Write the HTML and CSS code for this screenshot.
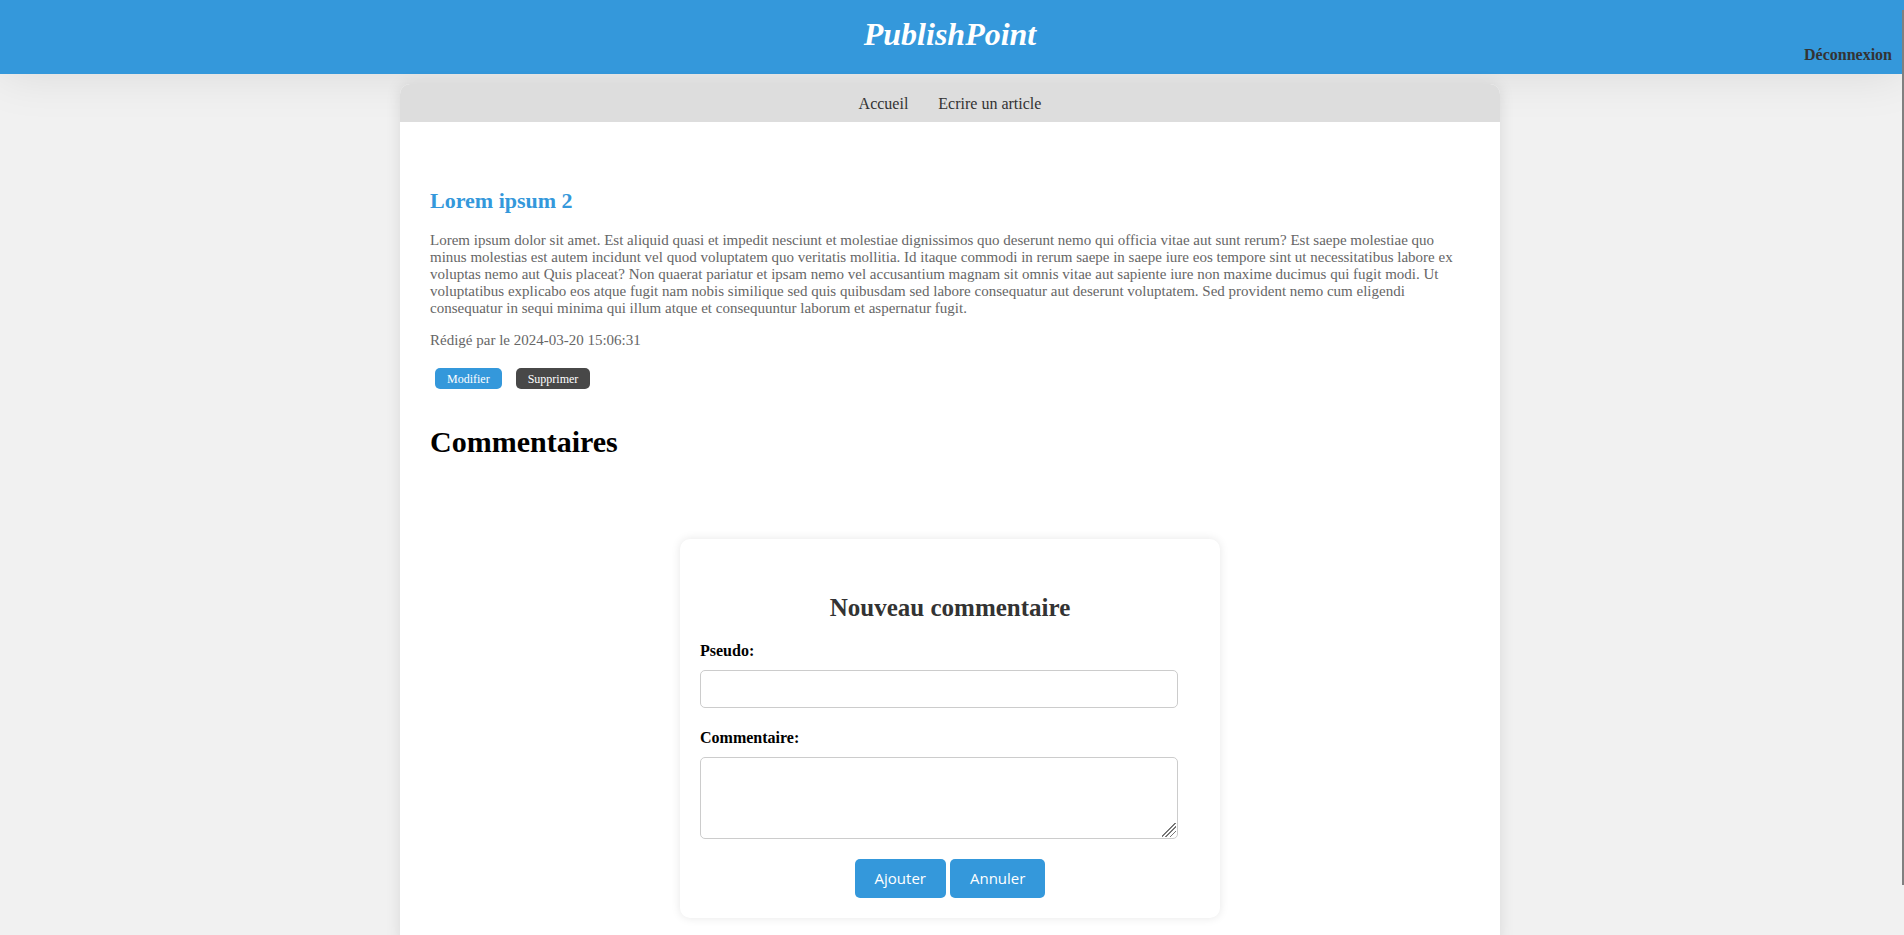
FILE: index.html
```html
<!DOCTYPE html>
<html lang="fr">
<head>
<meta charset="utf-8">
<meta name="viewport" content="width=device-width, initial-scale=1">
<title>PublishPoint</title>
<link rel="stylesheet" href="styles.css">
</head>
<body>
<header class="site-header">
  <h1 class="brand">PublishPoint</h1>
  <a class="logout" href="#">Déconnexion</a>
</header>
<div class="layout">
<main class="page">
  <nav class="menu">
    <a class="menu-link" href="#">Accueil</a>
    <a class="menu-link" href="#">Ecrire un article</a>
  </nav>
  <div class="content">
    <article class="article">
      <h2 class="article-title">Lorem ipsum 2</h2>
      <p class="article-text">Lorem ipsum dolor sit amet. Est aliquid quasi et impedit nesciunt et molestiae dignissimos quo deserunt nemo qui officia vitae aut sunt rerum? Est saepe molestiae quo minus molestias est autem incidunt vel quod voluptatem quo veritatis mollitia. Id itaque commodi in rerum saepe in saepe iure eos tempore sint ut necessitatibus labore ex voluptas nemo aut Quis placeat? Non quaerat pariatur et ipsam nemo vel accusantium magnam sit omnis vitae aut sapiente iure non maxime ducimus qui fugit modi. Ut voluptatibus explicabo eos atque fugit nam nobis similique sed quis quibusdam sed labore consequatur aut deserunt voluptatem. Sed provident nemo cum eligendi consequatur in sequi minima qui illum atque et consequuntur laborum et aspernatur fugit.</p>
      <p class="article-text">Rédigé par le 2024-03-20 15:06:31</p>
      <div class="actions">
        <a class="action" href="#">Modifier</a>
        <a class="action action-delete" href="#">Supprimer</a>
      </div>
    </article>
    <h1 class="comments-title">Commentaires</h1>
    <form class="comment-form">
      <h2 class="form-title">Nouveau commentaire</h2>
      <label class="label" for="pseudo">Pseudo:</label>
      <input class="field" type="text" id="pseudo" name="pseudo">
      <label class="label" for="commentaire">Commentaire:</label>
      <textarea class="field field-area" id="commentaire" name="commentaire"></textarea>
      <div class="buttons">
        <button class="button" type="submit">Ajouter</button>
        <button class="button" type="reset">Annuler</button>
      </div>
    </form>
  </div>
</main>
</div>
<div class="scroll-thumb" aria-hidden="true"></div>
</body>
</html>
```
FILE: styles.css
```css
html {
  scrollbar-width: none;
}

body {
  margin: 0;
  background: #f1f1f1;
  font-family: "Liberation Serif", "Times New Roman", serif;
  font-size: 16px;
}

a {
  color: inherit;
  text-decoration: none;
}

.site-header {
  display: grid;
  grid-template-columns: 1fr auto 1fr;
  box-sizing: border-box;
  min-height: 74px;
  padding: 10px 12px 10px 8px;
  background: #3498db;
  box-shadow: 0 0 50px rgba(0, 0, 0, 0.1);
}

.brand {
  grid-column: 2;
  margin: 0;
  padding-top: 6px;
  color: #fff;
  font-size: 32px;
  font-style: italic;
}

.logout {
  justify-self: end;
  align-self: end;
  color: #333;
  font-weight: bold;
}

.layout {
  padding: 10px 4px 20px 0;
}

.page {
  max-width: 1100px;
  margin: 0 auto;
  border-radius: 10px;
  background: #fff;
  box-shadow: 0 0 15px rgba(0, 0, 0, 0.1);
  overflow: hidden;
}

.menu {
  display: flex;
  justify-content: center;
  gap: 30px;
  padding: 11px 10px 9px;
  background: #ddd;
  color: #333;
  line-height: 18px;
}

.content {
  padding: 66px 30px 30px;
}

.article-title {
  margin: 0 0 18px;
  color: #3498db;
  font-size: 22px;
}

.article-text {
  margin: 0 0 15px;
  color: #666;
  font-size: 15px;
  line-height: 17px;
}

.actions {
  display: flex;
  gap: 14px;
  margin: 19px 5px 0;
}

.action {
  padding: 4px 12px 2px;
  border-radius: 5px;
  background: #3498db;
  color: #fff;
  font-size: 12px;
  line-height: 15px;
}

.action-delete {
  background: #484848;
}

.comments-title {
  margin: 35px 0 0;
  font-size: 30px;
  line-height: 36px;
}

.comment-form {
  max-width: 500px;
  margin: 79px auto 0;
  padding: 54px 20px 20px;
  border-radius: 10px;
  background: #fff;
  box-shadow: 0 0 10px rgba(0, 0, 0, 0.1);
}

.form-title {
  margin: 0 0 18px;
  color: #333;
  font-size: 25px;
  line-height: 30px;
  text-align: center;
}

.label {
  display: block;
  margin-bottom: 10px;
  font-weight: bold;
  line-height: 19px;
}

.field {
  display: block;
  box-sizing: border-box;
  width: calc(100% - 22px);
  height: 38px;
  margin: 0 0 20px;
  padding: 10px;
  border: 1px solid #ccc;
  border-radius: 5px;
  background: #fff;
  font: 15px "Open Sans", sans-serif;
}

.field-area {
  height: 82px;
  resize: both;
}

.field-area::-webkit-resizer {
  background: linear-gradient(135deg, transparent 9px, #777 9px 10px, transparent 10px 12px, #777 12px 13px, transparent 13px 15px, #777 15px 16px, transparent 16px) 0 0 / 14px 14px no-repeat;
}

.buttons {
  display: flex;
  justify-content: center;
  gap: 4px;
}

.button {
  padding: 10px 20px;
  border: 0;
  border-radius: 5px;
  background: #3498db;
  color: #fff;
  font: 15px/19px "Open Sans", sans-serif;
  cursor: pointer;
}

.scroll-thumb {
  position: fixed;
  top: 10px;
  right: 0;
  width: 2px;
  height: 875px;
  background: #808080;
}
```
